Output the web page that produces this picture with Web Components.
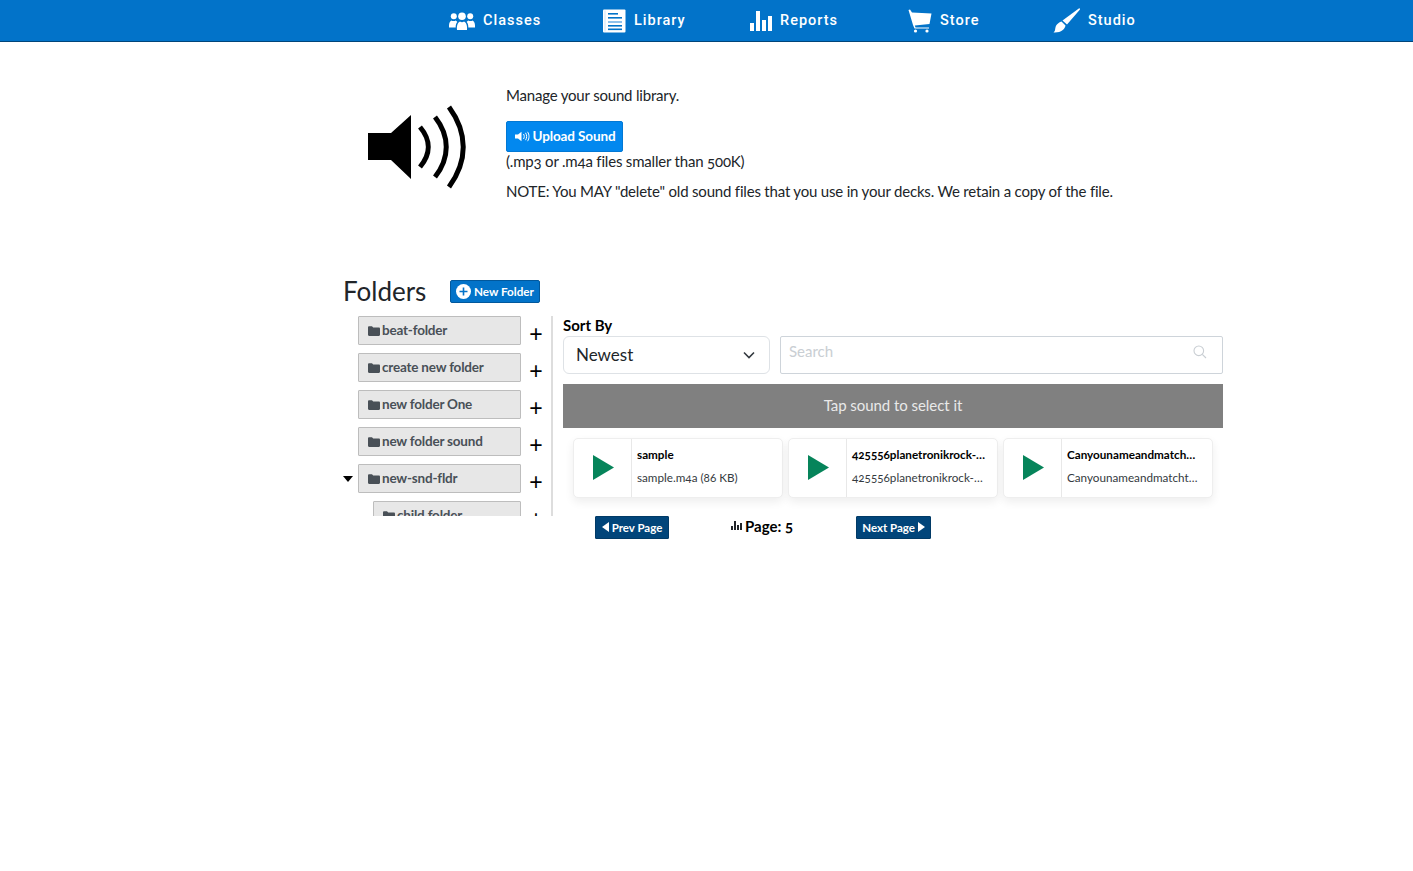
<!DOCTYPE html>
<html><head><meta charset="utf-8"><title>Sound library</title>
<style>
html,body{margin:0;padding:0;background:#fff;color:#212529;font-family:Lato,"Open Sans",sans-serif;font-size:15px;font-variant-numeric:oldstyle-nums}
</style></head><body>
<app-nav>
  <nav-item label="Classes" w="153" icon="classes"></nav-item>
  <nav-item label="Library" w="148" icon="library"></nav-item>
  <nav-item label="Reports" w="158" icon="reports"></nav-item>
  <nav-item label="Store" w="145" icon="store"></nav-item>
  <nav-item label="Studio" w="90" icon="studio"></nav-item>
</app-nav>
<page-shell>
  <intro-panel></intro-panel>
  <folders-head></folders-head>
  <div style="display:flex">
    <folder-tree>
      <folder-row name="beat-folder"></folder-row>
      <folder-row name="create new folder"></folder-row>
      <folder-row name="new folder One"></folder-row>
      <folder-row name="new folder sound"></folder-row>
      <folder-row name="new-snd-fldr" open></folder-row>
      <folder-row name="child folder" child></folder-row>
    </folder-tree>
    <sound-panel>
      <sound-card title="sample" file="sample.m4a (86 KB)"></sound-card>
      <sound-card title="425556planetronikrock-…" file="425556planetronikrock-…"></sound-card>
      <sound-card title="Canyounameandmatch…" file="Canyounameandmatcht…"></sound-card>
    </sound-panel>
  </div>
</page-shell>
<script>
const ICONS={
classes:'<svg width="26" height="18" viewBox="0 0 26 18" fill="#fff"><circle cx="13" cy="4.200" r="3.800"/><path d="M8 18c-.5-5 1-7.500 3-8.500 1 1 3 1 4 0 2 1 3.500 3.500 3 8.500z"/><circle cx="4.800" cy="4.200" r="3"/><path d="M0 15.500c-.2-4 .5-6 2.500-7 .7.800 3.300.8 4.200 0 .8.500 1.300 1 1.600 1.500-1.300 1.500-1.700 3.500-1.600 5.500z"/><circle cx="21.200" cy="4.200" r="3"/><path d="M26 15.500c.2-4-.5-6-2.500-7-.7.800-3.300.8-4.200 0-.8.500-1.300 1-1.600 1.500 1.300 1.500 1.700 3.500 1.600 5.500z"/></svg>',
library:'<svg width="24" height="24" viewBox="0 0 24 24"><rect x="1" y="0.500" width="22.500" height="23" rx="1" fill="#fff"/><rect x="2.500" y="1.500" width="1" height="21" fill="#cfe3f5"/><g fill="#0273c9"><rect x="6" y="4" width="10" height="1.600"/><rect x="6" y="8" width="14" height="1.600"/><rect x="6" y="12" width="14" height="2" fill="#8fc1ea"/><rect x="6" y="16" width="14" height="1.600"/><rect x="6" y="19.500" width="14" height="1.600"/></g></svg>',
reports:'<svg width="22" height="20" viewBox="0 0 22 20" fill="#fff"><rect x="0" y="12" width="4" height="8"/><rect x="6" y="0" width="4" height="20"/><rect x="12" y="9" width="4" height="11"/><rect x="18" y="5" width="4" height="15"/></svg>',
store:'<svg width="24" height="24" viewBox="0 0 24 24" fill="#fff"><path d="M.500 1 2 .500 4 3.500 23.500 4.500 21.500 15 6.800 16.500 7.500 18.500 21 18.500 21 19.500 6.500 19.500 5 16z"/><circle cx="7.500" cy="22" r="1.600"/><circle cx="19" cy="22" r="1.600"/></svg>',
studio:'<svg width="27" height="25" viewBox="0 0 27 25" fill="#fff"><path d="M26.500 0 27 1.500 14 16.500 9.500 12.500z"/><path d="M8.500 13.500 12.500 17.500C12 21 8 25 .500 24.500 3 23 1.500 20 3.500 17 4.500 15.500 6.500 14 8.500 13.500z"/></svg>'};
function def(name,css,html){
  class C extends HTMLElement{
    constructor(){super();this.attachShadow({mode:'open'});}
    connectedCallback(){this.shadowRoot.innerHTML='<style>'+css+'</style>'+(typeof html==='function'?html(this):html);}
  }
  customElements.define(name,C);
}
const folderIcon='<svg width="12" height="10" viewBox="0 0 12 10" fill="#495057"><path d="M0 1.500C0 .8.500.300 1.200.300H4L5.200 1.500H10.800C11.500 1.500 12 2 12 2.700V8.800C12 9.500 11.500 10 10.800 10H1.200C.500 10 0 9.500 0 8.800z"/></svg>';
def('app-nav',':host{display:flex;height:41px;background:#0273c9;border-bottom:1px solid #01457a;padding-left:449px;align-items:center;box-sizing:content-box}','<slot></slot>');
def('nav-item',':host{display:flex;align-items:center;height:41px;color:#fff;font:500 14.500px Roboto,sans-serif;letter-spacing:1px;flex:none}.i{display:flex;align-items:center;margin-right:8px}',e=>`<style>:host{width:${e.getAttribute('w')}px}</style><span class="i">${ICONS[e.getAttribute('icon')]}</span><span>${e.getAttribute('label')}</span>`);
def('page-shell',':host{display:block;padding-left:343px;width:880px}','<slot></slot>');
def('intro-panel',`:host{display:flex;height:231px;box-sizing:border-box;padding-top:43px;letter-spacing:-.19px}
.ic{width:163px;flex:none;padding:20px 0 0 25px;box-sizing:border-box}
.t p{margin:0;line-height:20px}
.u{display:inline-flex;align-items:center;gap:3px;height:31px;box-sizing:border-box;width:117px;padding:0 0 1px 1px;justify-content:center;background:#0288ef;border:1px solid #0278d4;border-radius:2px;color:#fff;font-weight:700;font-size:13.500px;letter-spacing:-.12px;margin-top:16px}
.l2{margin-top:-1px!important}.n{margin-top:10px!important}`,
`<div class="ic"><svg width="98" height="86" viewBox="0 0 98 86"><path d="M0 28H23L43 10V74L23 55H0z" fill="#000"/><g fill="none" stroke="#000" stroke-width="5"><path d="M52 22C63 35 63 49 52 62"/><path d="M67 12C82 31 82 53 67 72"/><path d="M81 2C100 28 100 56 81 82"/></g></svg></div>
<div class="t"><p>Manage your sound library.</p>
<div class="u"><svg width="15" height="11" viewBox="0 0 15 11" fill="none"><path d="M0 3.500H3L6.500 .800V10.200L3 7.500H0z" fill="#fff"/><g stroke="#fff"><path d="M8.500 3C9.500 4.500 9.500 6.500 8.500 8"/><path d="M10.500 1.800C12 4 12 7 10.500 9.200"/><path d="M12.500 .8C14.500 3.500 14.500 7.500 12.500 10.200"/></g></svg>Upload Sound</div>
<p class="l2">(.mp3 or .m4a files smaller than 500K)</p>
<p class="n">NOTE: You MAY "delete" old sound files that you use in your decks. We retain a copy of the file.</p></div>`);
def('folders-head',`:host{display:flex;align-items:center;height:36px;margin-bottom:5px}
h2{margin:0;font-weight:400;font-size:26px;color:#212529;width:107px}
.b{display:flex;align-items:center;gap:3px;width:90px;height:23px;box-sizing:border-box;padding:0 0 1px 5px;background:#0273c9;border:1px solid #01589c;border-radius:2px;color:#fff;font-weight:700;font-size:11.700px}
.b svg{margin-top:1px}`,
`<h2>Folders</h2><div class="b"><svg width="15" height="15" viewBox="0 0 15 15"><circle cx="7.500" cy="7.500" r="7.500" fill="#fff"/><path d="M7.500 3.500v8M3.500 7.500h8" stroke="#0273c9" stroke-width="1.600"/></svg>New Folder</div>`);
def('folder-tree',`:host{display:block;width:208px;height:200px;overflow:hidden;border-right:2px solid #ddd;flex:none;margin-top:2px;box-sizing:content-box}`,'<slot></slot>');
def('folder-row',`:host{display:flex;height:29px;margin-bottom:8px;position:relative;padding-left:15px}
.b{flex:1;display:flex;align-items:center;gap:2px;box-sizing:border-box;height:29px;padding:0 0 1px 9px;background:#e7e7e7;border:1px solid #bdbdbd;border-radius:1px;color:#495057;font-weight:700;font-size:13.500px;letter-spacing:-.2px}
.b svg{margin-top:1px}
.p{width:30px;flex:none;color:#000;font-size:23px;line-height:36px;text-align:center;font-family:"Liberation Sans",sans-serif}
.c{position:absolute;left:0;top:12px;width:0;height:0;border:5.500px solid transparent;border-top:6px solid #000;border-bottom:0}`,
e=>`<style>:host{${e.hasAttribute('child')?'padding-left:30px':''}}</style>${e.hasAttribute('open')?'<span class="c"></span>':''}<div class="b">${folderIcon}<span>${e.getAttribute('name')}</span></div><span class="p">+</span>`);
def('sound-panel',`:host{display:block;width:660px;margin-left:10px;flex:none}
.s{font-weight:700;font-size:15px;color:#000;height:20px;line-height:18px;margin-top:2px}
.r{display:flex;gap:10px;height:38px}
.sel{width:207px;box-sizing:border-box;border:1px solid #dee2e6;border-radius:6px;display:flex;align-items:center;justify-content:space-between;padding:0 14px 2px 12px;font-size:17px;color:#212529}
.sel svg{margin-top:2px}
.q{width:443px;box-sizing:border-box;border:1px solid #ced4da;border-radius:2px;display:flex;justify-content:space-between;padding:5px 15px 0 8px;font-size:15px;color:#c9ced3;line-height:18px}
.q svg{margin-top:3px}
.bar{margin-top:10px;height:44px;box-sizing:border-box;padding-bottom:2px;background:#808080;color:#e9e9e9;display:flex;align-items:center;justify-content:center;font-size:15px;letter-spacing:-.05px}
.cards{display:flex;gap:5px;margin:10px 0 0 10px}
.pg{display:flex;margin-top:18px;padding-left:32px;height:23px;color:#000}
.b{display:flex;align-items:center;gap:3px;height:23px;box-sizing:border-box;padding-bottom:1px;justify-content:center;background:#01457a;border:1px solid #013a66;border-radius:1px;color:#fff;font-weight:700;font-size:11.500px}
.m{display:flex;align-items:center;gap:3px;font-weight:700;font-size:15px;margin:0 63px 0 62px;height:19px}`,
`<div class="s">Sort By</div>
<div class="r"><div class="sel"><span>Newest</span><svg width="12" height="8" viewBox="0 0 12 8" fill="none"><path d="M1 1.500 6 6.500 11 1.500" stroke="#343a40" stroke-width="1.600"/></svg></div>
<div class="q"><span>Search</span><svg width="14" height="14" viewBox="0 0 14 14" fill="none" stroke="#c9ced3" stroke-width="1.100"><circle cx="5.800" cy="5.800" r="4.800"/><path d="M9.300 9.300 13 13"/></svg></div></div>
<div class="bar">Tap sound to select it</div>
<div class="cards"><slot></slot></div>
<div class="pg"><div class="b" style="width:74px"><svg width="7" height="10" viewBox="0 0 7 10" fill="#fff"><path d="M7 0V10L0 5z"/></svg>Prev Page</div>
<div class="m"><svg width="11" height="9" viewBox="0 0 11 9" fill="#212529"><rect y="5" width="2" height="4"/><rect x="3" width="2" height="9"/><rect x="6" y="4" width="2" height="5"/><rect x="9" y="2" width="2" height="7"/></svg>Page: 5</div>
<div class="b" style="width:75px">Next Page<svg width="7" height="10" viewBox="0 0 7 10" fill="#fff"><path d="M0 0V10L7 5z"/></svg></div></div>`);
def('sound-card',`:host{display:flex;width:210px;height:60px;box-sizing:border-box;border:1px solid #eee;border-radius:5px;box-shadow:0 4px 10px rgba(0,0,0,.07);background:#fff;flex:none}
.pl{width:58px;flex:none;border-right:1px solid #e8e8e8;display:flex;align-items:center;justify-content:center;box-sizing:border-box;padding:0 0 2px 1px}
.x{min-width:0;padding:0 0 0 5px;white-space:nowrap}
.t{font-weight:700;font-size:11.700px;color:#000;line-height:14px;margin-top:8px}
.f{font-size:11.700px;color:#343a40;line-height:14px;margin-top:9px}`,
e=>`<div class="pl"><svg width="21" height="25" viewBox="0 0 21 25"><path d="M0 0 21 12.500 0 25z" fill="#06845a"/></svg></div><div class="x"><div class="t">${e.getAttribute('title')}</div><div class="f">${e.getAttribute('file')}</div></div>`);
</script>
</body></html>
